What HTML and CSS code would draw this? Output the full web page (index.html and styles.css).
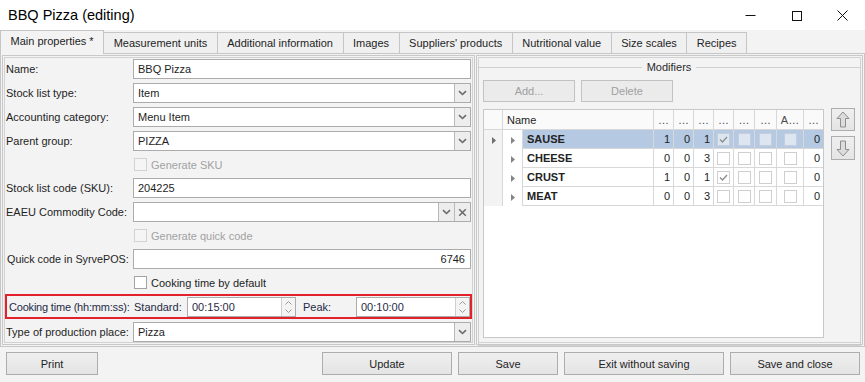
FILE: index.html
```html
<!DOCTYPE html>
<html>
<head>
<meta charset="utf-8">
<title>BBQ Pizza (editing)</title>
<link rel="stylesheet" href="styles.css">
</head>
<body>
<div class="window">
  <header class="titlebar">
    <span class="title">BBQ Pizza (editing)</span>
    <div class="wincontrols">
      <span class="wc"><svg width="11" height="11" viewBox="0 0 11 11"><path d="M0.5 5.5H10.5" stroke="#111" stroke-width="1"/></svg></span>
      <span class="wc"><svg width="11" height="11" viewBox="0 0 11 11"><rect x="1.5" y="1.5" width="9" height="9" fill="none" stroke="#111" stroke-width="1"/></svg></span>
      <span class="wc"><svg width="11" height="11" viewBox="0 0 11 11"><path d="M0.5 0.5L10.5 10.5M10.5 0.5L0.5 10.5" stroke="#111" stroke-width="1"/></svg></span>
    </div>
  </header>

  <nav class="tabs">
    <div class="tab active">Main properties *</div>
    <div class="tab">Measurement units</div>
    <div class="tab">Additional information</div>
    <div class="tab">Images</div>
    <div class="tab">Suppliers' products</div>
    <div class="tab">Nutritional value</div>
    <div class="tab">Size scales</div>
    <div class="tab">Recipes</div>
  </nav>

  <main class="page">
    <section class="panel-left">
      <div class="row"><span class="lbl">Name:</span><div class="field"><span class="val">BBQ Pizza</span></div></div>
      <div class="row"><span class="lbl">Stock list type:</span><div class="field"><span class="val">Item</span><span class="dd"><svg width="9" height="6" viewBox="0 0 9 6"><path d="M1 1.2l3.5 3.3 3.5-3.3" fill="none" stroke="#6a6a6a" stroke-width="1.6"/></svg></span></div></div>
      <div class="row"><span class="lbl">Accounting category:</span><div class="field"><span class="val">Menu Item</span><span class="dd"><svg width="9" height="6" viewBox="0 0 9 6"><path d="M1 1.2l3.5 3.3 3.5-3.3" fill="none" stroke="#6a6a6a" stroke-width="1.6"/></svg></span></div></div>
      <div class="row"><span class="lbl">Parent group:</span><div class="field"><span class="val">PIZZA</span><span class="dd"><svg width="9" height="6" viewBox="0 0 9 6"><path d="M1 1.2l3.5 3.3 3.5-3.3" fill="none" stroke="#6a6a6a" stroke-width="1.6"/></svg></span></div></div>
      <div class="row cbrow"><span class="cb disabled"></span><span class="cbtext disabled">Generate SKU</span></div>
      <div class="row"><span class="lbl">Stock list code (SKU):</span><div class="field"><span class="val">204225</span></div></div>
      <div class="row"><span class="lbl">EAEU Commodity Code:</span><div class="field"><span class="val"></span><span class="dd"><svg width="9" height="6" viewBox="0 0 9 6"><path d="M1 1.2l3.5 3.3 3.5-3.3" fill="none" stroke="#6a6a6a" stroke-width="1.6"/></svg></span><span class="dd"><svg width="9" height="9" viewBox="0 0 9 9"><path d="M1.2 1.2l6.6 6.6M7.8 1.2l-6.6 6.6" stroke="#6a6a6a" stroke-width="1.5"/></svg></span></div></div>
      <div class="row cbrow"><span class="cb disabled"></span><span class="cbtext disabled">Generate quick code</span></div>
      <div class="row"><span class="lbl lbl-wide">Quick code in SyrvePOS:</span><div class="field"><span class="val val-end">6746</span></div></div>
      <div class="row cbrow cookdef"><span class="cb"></span><span class="cbtext">Cooking time by default</span></div>
      <div class="cook">
        <span class="cook-lbl">Cooking time (hh:mm:ss):</span>
        <span class="cook-sub">Standard:</span>
        <div class="field spin std"><span class="val">00:15:00</span><span class="spinbtn"><svg width="9" height="14" viewBox="0 0 9 14"><path d="M1.5 4.5l3-3 3 3M1.5 9.5l3 3 3-3" fill="none" stroke="#9a9a9a" stroke-width="1"/></svg></span></div>
        <span class="cook-sub peak">Peak:</span>
        <div class="field spin"><span class="val">00:10:00</span><span class="spinbtn"><svg width="9" height="14" viewBox="0 0 9 14"><path d="M1.5 4.5l3-3 3 3M1.5 9.5l3 3 3-3" fill="none" stroke="#9a9a9a" stroke-width="1"/></svg></span></div>
      </div>
      <div class="row"><span class="lbl">Type of production place:</span><div class="field"><span class="val">Pizza</span><span class="dd"><svg width="9" height="6" viewBox="0 0 9 6"><path d="M1 1.2l3.5 3.3 3.5-3.3" fill="none" stroke="#6a6a6a" stroke-width="1.6"/></svg></span></div></div>
    </section>

    <section class="panel-right">
      <fieldset class="group">
        <legend>Modifiers</legend>
        <div class="gb-buttons">
          <button class="btn small disabled">Add...</button>
          <button class="btn small disabled">Delete</button>
        </div>
        <div class="gridarea">
          <div class="grid">
            <table>
              <colgroup>
                <col style="width:19px"><col style="width:20px"><col style="width:131px">
                <col style="width:20px"><col style="width:20px"><col style="width:20px">
                <col style="width:20px"><col style="width:21px"><col style="width:22px">
                <col style="width:27px"><col style="width:19px">
              </colgroup>
              <thead>
                <tr>
                  <th class="ind"></th>
                  <th colspan="2" class="hname">Name</th>
                  <th>…</th><th>…</th><th>…</th><th>…</th><th>…</th><th>…</th><th>A…</th><th class="last">…</th>
                </tr>
              </thead>
              <tbody>
                <tr class="sel">
                  <td class="ind"><svg width="4" height="7" viewBox="0 0 4 7"><path d="M0 0L4 3.5L0 7Z" fill="#6e6e6e"/></svg></td>
                  <td class="exp"><svg width="4" height="7" viewBox="0 0 4 7"><path d="M0 0L4 3.5L0 7Z" fill="#858585"/></svg></td>
                  <td class="name">SAUSE</td>
                  <td class="num">1</td><td class="num">0</td><td class="num">1</td>
                  <td class="chk"><span class="gcb"><svg width="11" height="11" viewBox="0 0 11 11"><path d="M2 5.5l2.5 2.5 4.5-5" fill="none" stroke="#8c8c8c" stroke-width="1.3"/></svg></span></td>
                  <td class="chk"><span class="gcb"></span></td>
                  <td class="chk"><span class="gcb"></span></td>
                  <td class="chk"><span class="gcb"></span></td>
                  <td class="num last">0</td>
                </tr>
                <tr>
                  <td class="ind"></td>
                  <td class="exp"><svg width="4" height="7" viewBox="0 0 4 7"><path d="M0 0L4 3.5L0 7Z" fill="#858585"/></svg></td>
                  <td class="name">CHEESE</td>
                  <td class="num">0</td><td class="num">0</td><td class="num">3</td>
                  <td class="chk"><span class="gcb"></span></td>
                  <td class="chk"><span class="gcb"></span></td>
                  <td class="chk"><span class="gcb"></span></td>
                  <td class="chk"><span class="gcb"></span></td>
                  <td class="num last">0</td>
                </tr>
                <tr>
                  <td class="ind"></td>
                  <td class="exp"><svg width="4" height="7" viewBox="0 0 4 7"><path d="M0 0L4 3.5L0 7Z" fill="#858585"/></svg></td>
                  <td class="name">CRUST</td>
                  <td class="num">1</td><td class="num">0</td><td class="num">1</td>
                  <td class="chk"><span class="gcb"><svg width="11" height="11" viewBox="0 0 11 11"><path d="M2 5.5l2.5 2.5 4.5-5" fill="none" stroke="#8c8c8c" stroke-width="1.3"/></svg></span></td>
                  <td class="chk"><span class="gcb"></span></td>
                  <td class="chk"><span class="gcb"></span></td>
                  <td class="chk"><span class="gcb"></span></td>
                  <td class="num last">0</td>
                </tr>
                <tr>
                  <td class="ind"></td>
                  <td class="exp"><svg width="4" height="7" viewBox="0 0 4 7"><path d="M0 0L4 3.5L0 7Z" fill="#858585"/></svg></td>
                  <td class="name">MEAT</td>
                  <td class="num">0</td><td class="num">0</td><td class="num">3</td>
                  <td class="chk"><span class="gcb"></span></td>
                  <td class="chk"><span class="gcb"></span></td>
                  <td class="chk"><span class="gcb"></span></td>
                  <td class="chk"><span class="gcb"></span></td>
                  <td class="num last">0</td>
                </tr>
              </tbody>
            </table>
          </div>
          <div class="movers">
            <button class="btn mv"><svg width="14" height="17" viewBox="0 0 14 17"><path d="M7 1L13 7.5H9.5V16H4.5V7.5H1Z" fill="#dcdcdc" stroke="#8e8e8e" stroke-width="1" stroke-linejoin="round"/></svg></button>
            <button class="btn mv"><svg width="14" height="17" viewBox="0 0 14 17"><path d="M7 16L13 9.5H9.5V1H4.5V9.5H1Z" fill="#dcdcdc" stroke="#8e8e8e" stroke-width="1" stroke-linejoin="round"/></svg></button>
          </div>
        </div>
      </fieldset>
    </section>
  </main>

  <footer class="footer">
    <button class="btn fbtn print">Print</button>
    <div class="fright">
      <button class="btn fbtn w130">Update</button>
      <button class="btn fbtn w100">Save</button>
      <button class="btn fbtn w160">Exit without saving</button>
      <button class="btn fbtn w130">Save and close</button>
    </div>
  </footer>
</div>
</body>
</html>
```

FILE: styles.css
```css
* { box-sizing: border-box; }
html, body { margin: 0; padding: 0; }
body {
  width: 865px;
  height: 382px;
  overflow: hidden;
  background: #f3f3f3;
  font-family: "Liberation Sans", Arial, sans-serif;
  font-size: 11px;
  color: #1e1e1e;
}
.window { display: flex; flex-direction: column; height: 382px; }

/* title bar */
.titlebar {
  height: 30px;
  flex: none;
  background: #fff;
  display: flex;
  align-items: center;
  justify-content: space-between;
}
.title { font-size: 14.5px; color: #000; padding-left: 8px; }
.wincontrols { display: flex; height: 100%; }
.wc { width: 46px; display: flex; align-items: center; justify-content: center; }

/* tabs */
.tabs {
  height: 23px;
  flex: none;
  display: flex;
  align-items: flex-end;
  padding-left: 1px;
  position: relative;
  z-index: 1;
}
.tab {
  height: 21px;
  padding: 0 9.5px;
  border: 1px solid #c6c6c6;
  border-bottom: none;
  margin-left: -1px;
  background: #f0f0f0;
  display: flex;
  align-items: center;
  white-space: nowrap;
}
.tab.active {
  height: 24px;
  margin-bottom: -1px;
  background: #f3f3f3;
  padding-bottom: 3px;
}

/* page */
.page {
  height: 294px;
  flex: none;
  border: 1px solid #c6c6c6;
  padding: 1px;
  display: flex;
  gap: 1px;
}
.panel-left, .panel-right {
  border: 1px solid #c8c8c8;
  box-shadow: inset 0 0 0 1px #f3f3f3, inset 0 0 0 2px #d2d2d2;
}
.panel-left {
  width: 473px;
  flex: none;
  padding: 3px 3px 0 3px;
}
.panel-right { flex: 1; padding: 1px; }

.row {
  display: flex;
  align-items: center;
  height: 20px;
  margin-bottom: 4px;
}
.lbl { width: 127px; flex: none; white-space: nowrap; }
.lbl-wide { padding-left: 1px; font-size: 10.8px; }
.field {
  flex: 1;
  min-width: 0;
  height: 20px;
  border: 1px solid #acacac;
  background: #fff;
  display: flex;
  align-items: stretch;
}
.val {
  flex: 1;
  padding: 0 4px;
  display: flex;
  align-items: center;
  white-space: nowrap;
}
.val-end { justify-content: flex-end; padding-right: 5px; }
.dd {
  width: 16px;
  flex: none;
  border-left: 1px solid #b9b9b9;
  background: #ededed;
  display: flex;
  align-items: center;
  justify-content: center;
}

.cbrow { height: 19px; padding-left: 128px; }
.cookdef { margin-bottom: 2px; }
.cb {
  width: 13px;
  height: 13px;
  border: 1px solid #a3a3a3;
  background: #fff;
  flex: none;
}
.cb.disabled { border-color: #d2d2d2; background: #f5f5f5; }
.cbtext { margin-left: 4px; }
.cbtext.disabled { color: #a2a2a2; }

/* cooking time (highlighted) */
.cook {
  height: 25px;
  margin: 0 -1px 3px -1px;
  border: 2px solid #e4212b;
  padding-left: 2px;
  display: flex;
  align-items: center;
  color: #1f2b47;
}
.cook-lbl { width: 125px; flex: none; white-space: nowrap; letter-spacing: -0.2px; }
.cook-sub { width: 53px; flex: none; }
.cook-sub.peak { margin-left: 7px; }
.spin.std { flex: none; width: 109px; }
.spinbtn {
  width: 14px;
  flex: none;
  border-left: 1px solid #cfcfcf;
  background: #f4f4f4;
  display: flex;
  align-items: center;
  justify-content: center;
}

/* right panel */
.group {
  margin: 3px 0 0 0;
  padding: 0 5px 5px 4px;
  border: 1px solid #d0d0d0;
  height: 286px;
  min-width: 0;
}
.group legend {
  margin: 0 auto;
  padding: 0 5px;
  line-height: 14px;
  color: #2a2a2a;
}
.gb-buttons { display: flex; gap: 6px; margin-top: 6px; }
.btn {
  font: inherit;
  color: #1e1e1e;
  border: 1px solid #adadad;
  background: linear-gradient(#efefef, #e4e4e4);
  padding: 0;
  display: flex;
  align-items: center;
  justify-content: center;
}
.btn.small { width: 92px; height: 22px; }
.btn.disabled { color: #a0a0a0; border-color: #c2c2c2; background: #ebebeb; }

.gridarea { display: flex; gap: 7px; margin-top: 7px; align-items: flex-start; }
.grid {
  width: 341px;
  height: 229px;
  flex: none;
  border: 1px solid #c8c8c8;
  background: #fff;
  overflow: hidden;
}
.grid table {
  border-collapse: separate;
  border-spacing: 0;
  table-layout: fixed;
  width: 339px;
}
.grid th {
  height: 20px;
  font-weight: normal;
  color: #4a4a4a;
  background: #fafafa;
  border-right: 1px solid #d8d8d8;
  border-bottom: 1px solid #d8d8d8;
  padding: 0;
  text-align: center;
  white-space: nowrap;
  overflow: hidden;
}
.grid th.hname { text-align: left; padding-left: 4px; color: #1e1e1e; }
.grid th.last, .grid td.last { border-right: none; }
.grid td {
  height: 19px;
  padding: 0;
  border-right: 1px solid #d8d8d8;
  border-bottom: 1px solid #d8d8d8;
  white-space: nowrap;
}
.grid td.ind {
  background: #f3f3f3;
  border-bottom: none;
  text-align: center;
  padding-left: 1px;
}
.grid td.exp { border-bottom: none; text-align: center; }
.grid td svg { display: inline-block; vertical-align: middle; }
.grid td.name { font-weight: bold; padding-left: 4px; font-size: 11px; color: #222; }
.grid td.num { text-align: right; padding-right: 3px; }
.grid td.chk { text-align: center; }
.gcb {
  display: inline-flex;
  width: 13px;
  height: 13px;
  border: 1px solid #cfcfcf;
  background: #fff;
  vertical-align: middle;
  align-items: center;
  justify-content: center;
}
.grid tr.sel td.name, .grid tr.sel td.num, .grid tr.sel td.chk { background: #b5c9e2; }
.grid tr.sel .gcb { background: #dce5f0; border-color: #c4cfdd; }

.movers { display: flex; flex-direction: column; gap: 5px; margin-top: -1px; }
.btn.mv { width: 24px; height: 23px; }
.btn.mv + .btn.mv { height: 24px; }

/* footer */
.footer {
  flex: 1;
  display: flex;
  justify-content: space-between;
  align-items: flex-start;
  padding: 5px 5px 0 6px;
}
.fright { display: flex; gap: 6px; }
.fbtn { height: 23px; }
.print { width: 92px; }
.w130 { width: 130px; }
.w100 { width: 100px; }
.w160 { width: 160px; }
```
